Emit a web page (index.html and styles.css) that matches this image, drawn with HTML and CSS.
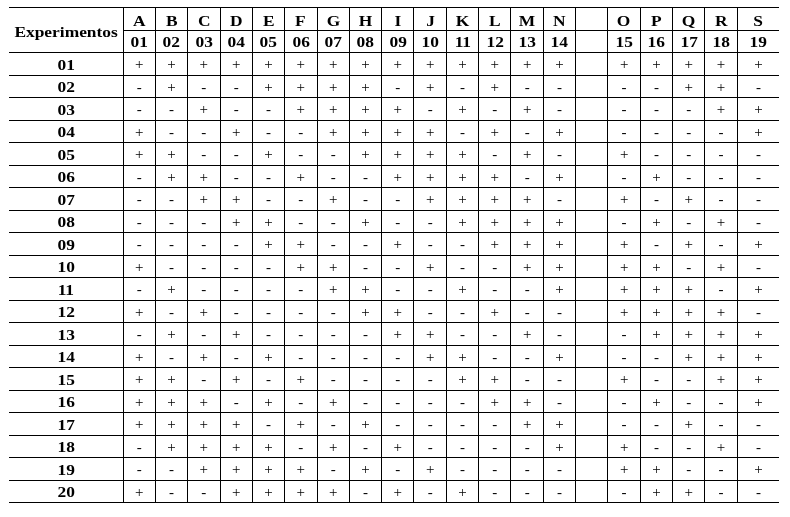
FILE: index.html
```html
<!DOCTYPE html>
<html lang="pt">
<head>
<meta charset="utf-8">
<title>Experimentos</title>
<link rel="stylesheet" href="styles.css">
</head>
<body>
<div class="wrap">
<table class="grid">
<colgroup>
<col class="c-first">
<col class="c"><col class="c"><col class="c"><col class="c"><col class="c"><col class="c"><col class="c"><col class="c"><col class="c"><col class="c"><col class="c"><col class="c"><col class="c"><col class="c">
<col class="c">
<col class="c"><col class="c"><col class="c"><col class="c">
<col class="c-last">
</colgroup>
<thead>
<tr class="h1">
<th class="lbl" rowspan="2"><span>Experimentos</span></th>
<th><span>A</span></th><th><span>B</span></th><th><span>C</span></th><th><span>D</span></th><th><span>E</span></th><th><span>F</span></th><th><span>G</span></th><th><span>H</span></th><th><span>I</span></th><th><span>J</span></th><th><span>K</span></th><th><span>L</span></th><th><span>M</span></th><th><span>N</span></th>
<th></th>
<th><span>O</span></th><th><span>P</span></th><th><span>Q</span></th><th><span>R</span></th><th><span>S</span></th>
</tr>
<tr class="h2">
<th><span>01</span></th><th><span>02</span></th><th><span>03</span></th><th><span>04</span></th><th><span>05</span></th><th><span>06</span></th><th><span>07</span></th><th><span>08</span></th><th><span>09</span></th><th><span>10</span></th><th><span>11</span></th><th><span>12</span></th><th><span>13</span></th><th><span>14</span></th>
<th></th>
<th><span>15</span></th><th><span>16</span></th><th><span>17</span></th><th><span>18</span></th><th><span>19</span></th>
</tr>
</thead>
<tbody>
<tr><th class="lbl"><span>01</span></th><td>+</td><td>+</td><td>+</td><td>+</td><td>+</td><td>+</td><td>+</td><td>+</td><td>+</td><td>+</td><td>+</td><td>+</td><td>+</td><td>+</td><td></td><td>+</td><td>+</td><td>+</td><td>+</td><td>+</td></tr>
<tr><th class="lbl"><span>02</span></th><td>-</td><td>+</td><td>-</td><td>-</td><td>+</td><td>+</td><td>+</td><td>+</td><td>-</td><td>+</td><td>-</td><td>+</td><td>-</td><td>-</td><td></td><td>-</td><td>-</td><td>+</td><td>+</td><td>-</td></tr>
<tr><th class="lbl"><span>03</span></th><td>-</td><td>-</td><td>+</td><td>-</td><td>-</td><td>+</td><td>+</td><td>+</td><td>+</td><td>-</td><td>+</td><td>-</td><td>+</td><td>-</td><td></td><td>-</td><td>-</td><td>-</td><td>+</td><td>+</td></tr>
<tr><th class="lbl"><span>04</span></th><td>+</td><td>-</td><td>-</td><td>+</td><td>-</td><td>-</td><td>+</td><td>+</td><td>+</td><td>+</td><td>-</td><td>+</td><td>-</td><td>+</td><td></td><td>-</td><td>-</td><td>-</td><td>-</td><td>+</td></tr>
<tr><th class="lbl"><span>05</span></th><td>+</td><td>+</td><td>-</td><td>-</td><td>+</td><td>-</td><td>-</td><td>+</td><td>+</td><td>+</td><td>+</td><td>-</td><td>+</td><td>-</td><td></td><td>+</td><td>-</td><td>-</td><td>-</td><td>-</td></tr>
<tr><th class="lbl"><span>06</span></th><td>-</td><td>+</td><td>+</td><td>-</td><td>-</td><td>+</td><td>-</td><td>-</td><td>+</td><td>+</td><td>+</td><td>+</td><td>-</td><td>+</td><td></td><td>-</td><td>+</td><td>-</td><td>-</td><td>-</td></tr>
<tr><th class="lbl"><span>07</span></th><td>-</td><td>-</td><td>+</td><td>+</td><td>-</td><td>-</td><td>+</td><td>-</td><td>-</td><td>+</td><td>+</td><td>+</td><td>+</td><td>-</td><td></td><td>+</td><td>-</td><td>+</td><td>-</td><td>-</td></tr>
<tr><th class="lbl"><span>08</span></th><td>-</td><td>-</td><td>-</td><td>+</td><td>+</td><td>-</td><td>-</td><td>+</td><td>-</td><td>-</td><td>+</td><td>+</td><td>+</td><td>+</td><td></td><td>-</td><td>+</td><td>-</td><td>+</td><td>-</td></tr>
<tr><th class="lbl"><span>09</span></th><td>-</td><td>-</td><td>-</td><td>-</td><td>+</td><td>+</td><td>-</td><td>-</td><td>+</td><td>-</td><td>-</td><td>+</td><td>+</td><td>+</td><td></td><td>+</td><td>-</td><td>+</td><td>-</td><td>+</td></tr>
<tr><th class="lbl"><span>10</span></th><td>+</td><td>-</td><td>-</td><td>-</td><td>-</td><td>+</td><td>+</td><td>-</td><td>-</td><td>+</td><td>-</td><td>-</td><td>+</td><td>+</td><td></td><td>+</td><td>+</td><td>-</td><td>+</td><td>-</td></tr>
<tr><th class="lbl"><span>11</span></th><td>-</td><td>+</td><td>-</td><td>-</td><td>-</td><td>-</td><td>+</td><td>+</td><td>-</td><td>-</td><td>+</td><td>-</td><td>-</td><td>+</td><td></td><td>+</td><td>+</td><td>+</td><td>-</td><td>+</td></tr>
<tr><th class="lbl"><span>12</span></th><td>+</td><td>-</td><td>+</td><td>-</td><td>-</td><td>-</td><td>-</td><td>+</td><td>+</td><td>-</td><td>-</td><td>+</td><td>-</td><td>-</td><td></td><td>+</td><td>+</td><td>+</td><td>+</td><td>-</td></tr>
<tr><th class="lbl"><span>13</span></th><td>-</td><td>+</td><td>-</td><td>+</td><td>-</td><td>-</td><td>-</td><td>-</td><td>+</td><td>+</td><td>-</td><td>-</td><td>+</td><td>-</td><td></td><td>-</td><td>+</td><td>+</td><td>+</td><td>+</td></tr>
<tr><th class="lbl"><span>14</span></th><td>+</td><td>-</td><td>+</td><td>-</td><td>+</td><td>-</td><td>-</td><td>-</td><td>-</td><td>+</td><td>+</td><td>-</td><td>-</td><td>+</td><td></td><td>-</td><td>-</td><td>+</td><td>+</td><td>+</td></tr>
<tr><th class="lbl"><span>15</span></th><td>+</td><td>+</td><td>-</td><td>+</td><td>-</td><td>+</td><td>-</td><td>-</td><td>-</td><td>-</td><td>+</td><td>+</td><td>-</td><td>-</td><td></td><td>+</td><td>-</td><td>-</td><td>+</td><td>+</td></tr>
<tr><th class="lbl"><span>16</span></th><td>+</td><td>+</td><td>+</td><td>-</td><td>+</td><td>-</td><td>+</td><td>-</td><td>-</td><td>-</td><td>-</td><td>+</td><td>+</td><td>-</td><td></td><td>-</td><td>+</td><td>-</td><td>-</td><td>+</td></tr>
<tr><th class="lbl"><span>17</span></th><td>+</td><td>+</td><td>+</td><td>+</td><td>-</td><td>+</td><td>-</td><td>+</td><td>-</td><td>-</td><td>-</td><td>-</td><td>+</td><td>+</td><td></td><td>-</td><td>-</td><td>+</td><td>-</td><td>-</td></tr>
<tr><th class="lbl"><span>18</span></th><td>-</td><td>+</td><td>+</td><td>+</td><td>+</td><td>-</td><td>+</td><td>-</td><td>+</td><td>-</td><td>-</td><td>-</td><td>-</td><td>+</td><td></td><td>+</td><td>-</td><td>-</td><td>+</td><td>-</td></tr>
<tr><th class="lbl"><span>19</span></th><td>-</td><td>-</td><td>+</td><td>+</td><td>+</td><td>+</td><td>-</td><td>+</td><td>-</td><td>+</td><td>-</td><td>-</td><td>-</td><td>-</td><td></td><td>+</td><td>+</td><td>-</td><td>-</td><td>+</td></tr>
<tr><th class="lbl"><span>20</span></th><td>+</td><td>-</td><td>-</td><td>+</td><td>+</td><td>+</td><td>+</td><td>-</td><td>+</td><td>-</td><td>+</td><td>-</td><td>-</td><td>-</td><td></td><td>-</td><td>+</td><td>+</td><td>-</td><td>-</td></tr>
</tbody>
</table>
</div>
</body>
</html>
```
FILE: styles.css
```css
html, body {
  margin: 0;
  padding: 0;
  background: #ffffff;
}

.wrap {
  padding: 7px 0 0 9px;
  background: #ffffff;
  filter: grayscale(100%);
}

.grid {
  border-collapse: collapse;
  table-layout: fixed;
  width: 770px;
  font-family: "Liberation Serif", "Times New Roman", serif;
  color: #000000;
  border-top: 1px solid #000000;
}

.c-first { width: 114px; }
.c { width: 32.34px; }
.c-last { width: 41.5px; }

.grid tr {
  height: 22.5px;
}

.grid th,
.grid td {
  padding: 0;
  text-align: center;
  vertical-align: middle;
  border-left: 1px solid #000000;
  border-bottom: 1px solid #000000;
  line-height: 16px;
}

.grid th {
  font-weight: bold;
  font-size: 14.5px;
}

.grid td {
  font-weight: normal;
  font-size: 15px;
  padding-top: 1px;
}

.grid .lbl {
  border-left: none;
}

.grid th span {
  display: inline-block;
  transform: scaleX(1.2);
  position: relative;
  top: 1px;
}

.grid .h1 th span {
  top: 2px;
}
```
